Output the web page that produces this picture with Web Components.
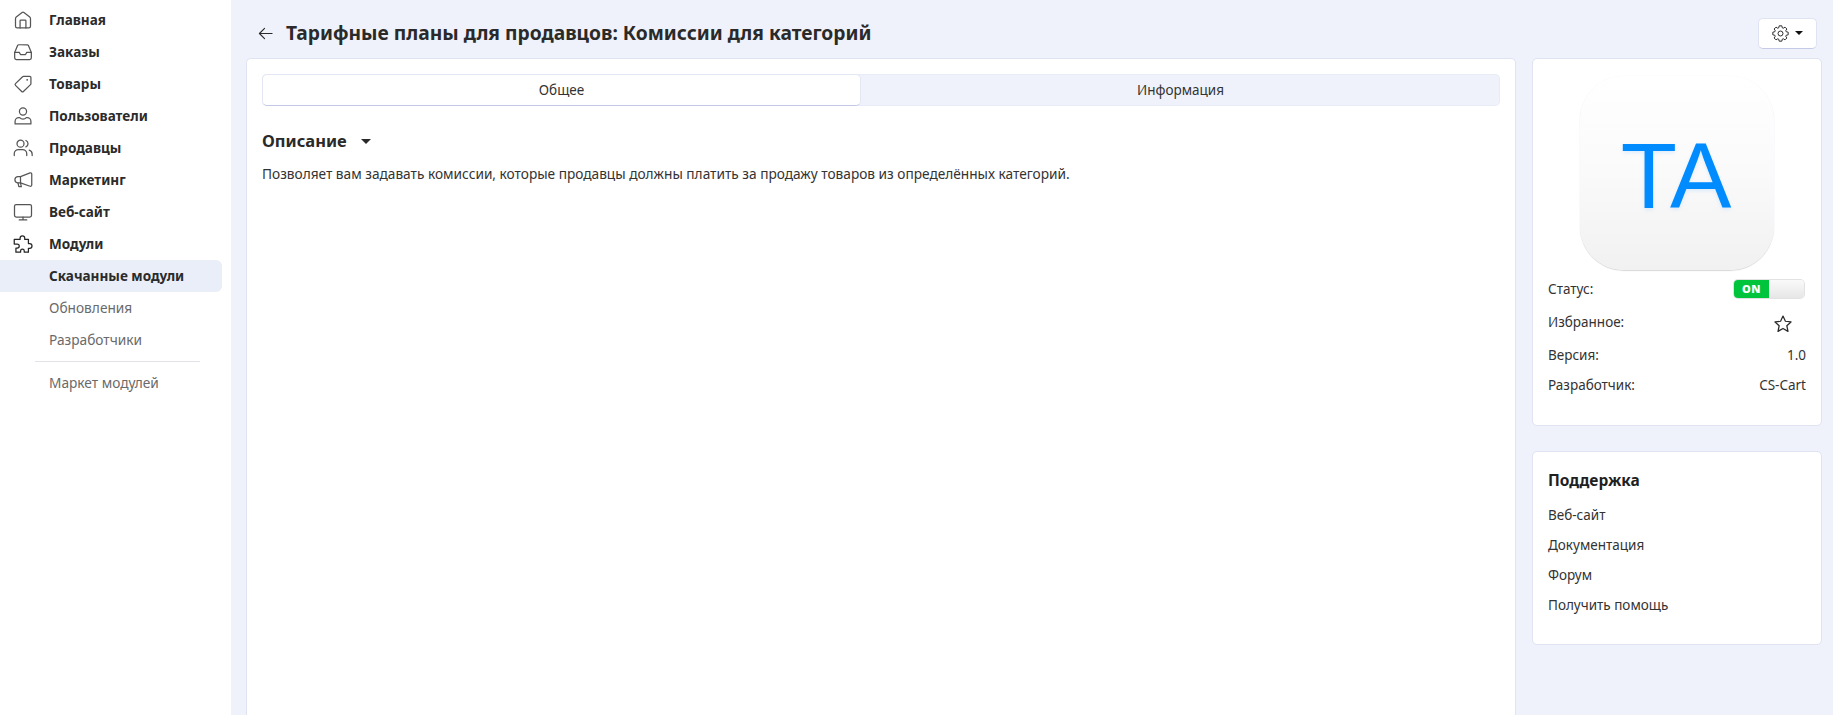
<!DOCTYPE html>
<html lang="ru">
<head>
<meta charset="utf-8">
<title>Комиссии для категорий</title>
<style>
  html, body { height: 100%; }
  body {
    margin: 0;
    background: #eff2fb;
    color: #2a2a2a;
    font: 14px/20px "Noto Sans", "Open Sans", sans-serif;
    overflow: hidden;
  }
  #page { display: flex; height: 715px; }
</style>
</head>
<body>
<div id="page">
  <side-bar>
    <nav-item label="Главная" icon="home"></nav-item>
    <nav-item label="Заказы" icon="inbox"></nav-item>
    <nav-item label="Товары" icon="tag"></nav-item>
    <nav-item label="Пользователи" icon="user"></nav-item>
    <nav-item label="Продавцы" icon="users"></nav-item>
    <nav-item label="Маркетинг" icon="megaphone"></nav-item>
    <nav-item label="Веб-сайт" icon="monitor"></nav-item>
    <nav-item label="Модули" icon="puzzle"></nav-item>
    <nav-item label="Скачанные модули" kind="active"></nav-item>
    <nav-item label="Обновления" kind="sub"></nav-item>
    <nav-item label="Разработчики" kind="sub"></nav-item>
    <nav-divider></nav-divider>
    <nav-item label="Маркет модулей" kind="sub"></nav-item>
  </side-bar>
  <main-area>
    <page-header slot="header" title="Тарифные планы для продавцов: Комиссии для категорий"></page-header>
    <main-card>
      <tab-bar></tab-bar>
      <addon-description></addon-description>
    </main-card>
    <addon-info slot="aside"></addon-info>
    <support-card slot="aside"></support-card>
  </main-area>
</div>

<script>
// stroke icons for the sidebar, all on a 24 box
const ICONS = {
  home: '<path d="M3 10.5c0-.8.3-1.5.9-2l7-5.500a1.800 1.800 0 0 1 2.200 0l7 5.500c.6.5.9 1.200.9 2v9a2 2 0 0 1-2 2H5a2 2 0 0 1-2-2z"/><path d="M8.500 21.500V13a1 1 0 0 1 1-1h5a1 1 0 0 1 1 1v8.500"/>',
  inbox: '<path d="M2 12.500 5.500 4.300a1.500 1.500 0 0 1 1.400-1h10.200a1.500 1.500 0 0 1 1.400 1L22 12.500V19a2 2 0 0 1-2 2H4a2 2 0 0 1-2-2z"/><path d="M2 12.500h5.500L9 15h6l1.500-2.500H22"/>',
  tag: '<path d="M12.600 2.800H20a1.500 1.500 0 0 1 1.500 1.500v7.400a1.500 1.500 0 0 1-.5 1L12.500 21a1.500 1.500 0 0 1-2.100 0L3 13.600a1.500 1.500 0 0 1 0-2.100l8.500-8.200a1.500 1.500 0 0 1 1.100-.5z"/><circle cx="17" cy="7" r="1.100" fill="currentColor" stroke="none"/>',
  user: '<circle cx="12" cy="6.500" r="4.300"/><path d="M2.500 21.500v-3c0-2.500 2-4.500 4.500-4.500h1c.9 1 2.300 1.700 4 1.700s3.100-.7 4-1.700h1c2.500 0 4.500 2 4.500 4.500v3z"/>',
  users: '<circle cx="9" cy="6.800" r="4.200"/><path d="M1.500 21v-2c0-3 2.500-5 5-5h5c2.500 0 5 2 5 5v2"/><path d="M15.500 3a4.200 4.200 0 0 1 0 7.700"/><path d="M19.500 14.500c2 .7 3.500 2.500 3.500 5V21"/>',
  megaphone: '<path d="M9 8 20.500 3.500a1.500 1.500 0 0 1 2 1.400v13.200a1.500 1.500 0 0 1-2 1.400L9 15.500z"/><path d="M9 8H5.500a3.800 3.800 0 0 0 0 7.500H9"/><path d="M6 15.500 7 20h3l-1-4.200"/>',
  monitor: '<rect x="1.800" y="3" width="20.400" height="15" rx="2"/><path d="M12 18v3.300M7.500 21.500h9"/>',
  puzzle: '<path d="M8.500 6.500V5a2.800 2.800 0 0 1 5.600 0v1.500h4.400v5h1.500a2.800 2.800 0 0 1 0 5.600h-1.500v4.700h-5v-1.500a2.200 2.200 0 0 0-4.400 0v1.500H3.500V17H5a2.500 2.500 0 0 0 0-5H1.500V6.500z"/>'
}

// outline of an eight tooth gear around 12,12
function gearPath() {
  const pts = []
  for (let i = 0; i < 8; i++) {
    const a = (i * Math.PI) / 4
    for (const [r, d] of [[8.4, -0.3], [11, -0.17], [11, 0.17], [8.4, 0.3]]) {
      pts.push((12 + r * Math.sin(a + d)).toFixed(2) + " " + (12 - r * Math.cos(a + d)).toFixed(2))
    }
  }
  return "M" + pts.join("L") + "z"
}

class SideBar extends HTMLElement {
  constructor() {
    super()
    this.attachShadow({ mode: "open" })
    this.shadowRoot.innerHTML = `
    <style>
      :host {
        display: flex;
        flex-direction: column;
        flex: none;
        box-sizing: border-box;
        width: 231px;
        padding: 4px 9px 0 0;
        background: #fff;
      }
    </style>
    <slot></slot>`
  }
}
customElements.define("side-bar", SideBar)

class NavItem extends HTMLElement {
  constructor() {
    super()
    this.attachShadow({ mode: "open" })
  }
  connectedCallback() {
    const name = this.getAttribute("icon")
    const icon = ICONS[name]
    this.shadowRoot.innerHTML = `
    <style>
      :host {
        display: flex;
        align-items: center;
        height: 32px;
        padding-left: 13px;
        border-radius: 0 6px 6px 0;
        color: #2b2b2b;
        font-weight: 700;
        font-size: 13.550px;
      }
      :host([kind="active"]) { background: #e9eef8; }
      :host([kind="sub"]) { color: #6a6a6a; font-weight: 400; font-size: 13.700px; }
      .icon { flex: none; width: 20px; height: 20px; margin-right: 16px; color: #555; }
      .icon.puzzle { color: #262626; }
      .spacer { flex: none; width: 36px; }
      svg { display: block; width: 20px; height: 20px; fill: none; stroke: currentColor; stroke-width: 1.500; stroke-linejoin: round; stroke-linecap: round; }
    </style>
    ${icon ? `<span class="icon ${name}"><svg viewBox="0 0 24 24">${icon}</svg></span>` : `<span class="spacer"></span>`}
    <span>${this.getAttribute("label")}</span>`
  }
}
customElements.define("nav-item", NavItem)

class NavDivider extends HTMLElement {
  constructor() {
    super()
    this.attachShadow({ mode: "open" })
    this.shadowRoot.innerHTML = `
    <style>
      :host { display: block; height: 1px; margin: 5px 22px 5px 35px; background: #e1e2e8; }
    </style>`
  }
}
customElements.define("nav-divider", NavDivider)

class MainArea extends HTMLElement {
  constructor() {
    super()
    this.attachShadow({ mode: "open" })
    this.shadowRoot.innerHTML = `
    <style>
      :host {
        display: flex;
        flex-direction: column;
        flex: 1;
        min-width: 0;
        padding: 0 11px 0 15px;
      }
      .columns { display: flex; flex: 1; gap: 16px; min-height: 0; }
      .aside { display: flex; flex-direction: column; flex: none; width: 290px; gap: 25px; }
    </style>
    <slot name="header"></slot>
    <div class="columns">
      <slot></slot>
      <div class="aside"><slot name="aside"></slot></div>
    </div>`
  }
}
customElements.define("main-area", MainArea)

class PageHeader extends HTMLElement {
  constructor() {
    super()
    this.attachShadow({ mode: "open" })
  }
  connectedCallback() {
    this.shadowRoot.innerHTML = `
    <style>
      :host { display: flex; align-items: center; height: 58px; box-sizing: border-box; padding: 8px 5px 0 12px; }
      .back { width: 15px; height: 15px; flex: none; margin-right: 13px; }
      h1 { flex: 1; margin: 0; font-size: 19.230px; font-weight: 700; line-height: 26px; color: #2a2a2a; }
      button {
        display: flex; align-items: center; justify-content: center; gap: 6px;
        width: 59px; height: 31px; padding: 0;
        background: #fff; border: 1px solid #dfe3f2; border-bottom-color: #c5cbe6; border-radius: 5px;
      }
      .gear { width: 17px; height: 17px; fill: none; stroke: #2a2a2a; stroke-width: 1.400; stroke-linejoin: round; }
      .caret { width: 0; height: 0; border: 4px solid transparent; border-top: 4px solid #111; border-bottom: 0; }
    </style>
    <svg class="back" viewBox="0 0 16 16" fill="none" stroke="#2a2a2a" stroke-width="1.200" stroke-linecap="round" stroke-linejoin="round"><path d="M15 8H1.500M7 2.500 1.500 8 7 13.500"/></svg>
    <h1>${this.getAttribute("title")}</h1>
    <button aria-label="Настройки">
      <svg class="gear" viewBox="0 0 24 24"><circle cx="12" cy="12" r="3.500"/><path d="${gearPath()}"/></svg>
      <span class="caret"></span>
    </button>`
  }
}
customElements.define("page-header", PageHeader)

class MainCard extends HTMLElement {
  constructor() {
    super()
    this.attachShadow({ mode: "open" })
    this.shadowRoot.innerHTML = `
    <style>
      :host {
        display: block;
        flex: 1;
        min-width: 0;
        box-sizing: border-box;
        padding: 15px 15px 0;
        background: #fff;
        border: 1px solid #dfe3f2;
        border-bottom: 0;
        border-radius: 5px 5px 0 0;
      }
    </style>
    <slot></slot>`
  }
}
customElements.define("main-card", MainCard)

class TabBar extends HTMLElement {
  constructor() {
    super()
    this.attachShadow({ mode: "open" })
    this.shadowRoot.innerHTML = `
    <style>
      :host {
        display: grid;
        grid-template-columns: 599px 1fr;
        height: 32px;
        background: #eff2fb;
        border-radius: 5px;
        box-shadow: inset 0 0 0 1px #e8ecf7;
      }
      div { display: flex; align-items: center; justify-content: center; font-size: 13.500px; color: #333; }
      .on {
        background: #fff;
        border: 1px solid #e3e6f3;
        border-bottom-color: #c2c8e6;
        border-radius: 5px;
      }
    </style>
    <div class="on">Общее</div>
    <div>Информация</div>`
  }
}
customElements.define("tab-bar", TabBar)

class AddonDescription extends HTMLElement {
  constructor() {
    super()
    this.attachShadow({ mode: "open" })
    this.shadowRoot.innerHTML = `
    <style>
      :host { display: block; padding-top: 23px; }
      .head { display: flex; align-items: center; gap: 14px; height: 24px; }
      h2 { margin: 0; font-size: 16.500px; font-weight: 700; line-height: 24px; color: #2a2a2a; }
      .caret { width: 0; height: 0; border: 5px solid transparent; border-top: 5px solid #2a2a2a; border-bottom: 0; }
      p { margin: 11px 0 0; font-size: 13.680px; line-height: 20px; color: #333; }
    </style>
    <div class="head"><h2>Описание</h2><span class="caret"></span></div>
    <p>Позволяет вам задавать комиссии, которые продавцы должны платить за продажу товаров из определённых категорий.</p>`
  }
}
customElements.define("addon-description", AddonDescription)

class InfoRow extends HTMLElement {
  constructor() {
    super()
    this.attachShadow({ mode: "open" })
    this.shadowRoot.innerHTML = `
    <style>
      :host { display: flex; align-items: center; justify-content: space-between; height: 30px; font-size: 13.500px; color: #333; }
    </style>
    <span><slot name="label"></slot></span>
    <span><slot></slot></span>`
  }
}
customElements.define("info-row", InfoRow)

class AddonInfo extends HTMLElement {
  constructor() {
    super()
    this.attachShadow({ mode: "open" })
    this.shadowRoot.innerHTML = `
    <style>
      :host {
        display: block;
        box-sizing: border-box;
        height: 368px;
        padding: 17px 15px 0;
        background: #fff;
        border: 1px solid #dfe3f2;
        border-radius: 5px;
      }
      .logo {
        display: flex; align-items: center; justify-content: center;
        box-sizing: border-box;
        width: 194px; height: 194px;
        margin: 0 auto;
        padding: 5px 2px 0 0;
        border-radius: 44px;
        background: linear-gradient(#fff, #fbfafa 50%, #f2f1f1);
        box-shadow: 0 1px 1px #d9d6d9, 0 0 1px #ececee;
        color: #008cff;
        font: 400 92px/1 "Liberation Sans", Arial, sans-serif;
        text-shadow: 0 2px 4px rgba(0, 140, 255, .12);
      }
      .toggle {
        display: flex; width: 70px; height: 18px; margin-right: 2px;
        border-radius: 4px; overflow: hidden;
        box-shadow: 0 0 0 1px #e2e2e2;
        font-size: 11px; font-weight: 700; line-height: 18px; text-align: center;
      }
      .toggle b { width: 35px; background: #00c53c; color: #fff; letter-spacing: .5px; }
      .toggle i { flex: 1; background: linear-gradient(#fafafa, #e6e6e6); }
      .star { display: block; width: 20px; height: 20px; margin: 3px 13px 0 0; fill: none; stroke: #2a2a2a; stroke-width: 1.500; stroke-linejoin: round; }
    </style>
    <div class="logo">TA</div>
    <info-row style="margin-top:4px"><span slot="label">Статус:</span><div class="toggle"><b>ON</b><i></i></div></info-row>
    <info-row style="height:36px"><span slot="label">Избранное:</span><svg class="star" viewBox="0 0 24 24"><path d="M12 2.500l2.900 6.200 6.700.8-5 4.600 1.400 6.700-6-3.400-6 3.400 1.400-6.700-5-4.600 6.700-.8z"/></svg></info-row>
    <info-row><span slot="label">Версия:</span>1.0</info-row>
    <info-row><span slot="label">Разработчик:</span>CS-Cart</info-row>`
  }
}
customElements.define("addon-info", AddonInfo)

class SupportCard extends HTMLElement {
  constructor() {
    super()
    this.attachShadow({ mode: "open" })
    this.shadowRoot.innerHTML = `
    <style>
      :host {
        display: block;
        box-sizing: border-box;
        height: 194px;
        padding: 16px 15px 0;
        background: #fff;
        border: 1px solid #dfe3f2;
        border-radius: 5px;
      }
      h3 { margin: 0 0 8px; font-size: 15.500px; font-weight: 700; line-height: 24px; color: #1f1f1f; }
      a { display: flex; align-items: center; height: 30px; font-size: 13.500px; color: #333; text-decoration: none; }
    </style>
    <h3>Поддержка</h3>
    <a>Веб-сайт</a>
    <a>Документация</a>
    <a>Форум</a>
    <a>Получить помощь</a>`
  }
}
customElements.define("support-card", SupportCard)
</script>
</body>
</html>
